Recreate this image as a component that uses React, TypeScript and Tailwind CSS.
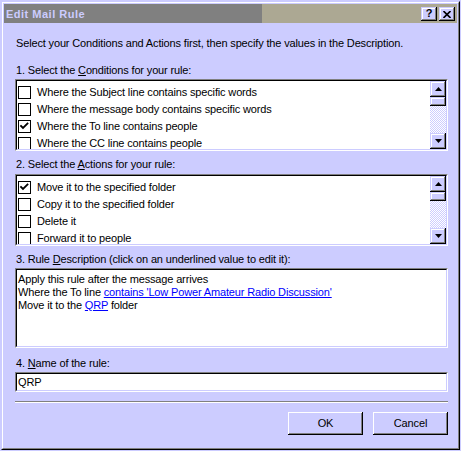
import React from 'react';

const conditions = [
  { label: 'Where the Subject line contains specific words', checked: false },
  { label: 'Where the message body contains specific words', checked: false },
  { label: 'Where the To line contains people', checked: true },
  { label: 'Where the CC line contains people', checked: false },
];

const actions = [
  { label: 'Move it to the specified folder', checked: true },
  { label: 'Copy it to the specified folder', checked: false },
  { label: 'Delete it', checked: false },
  { label: 'Forward it to people', checked: false },
];

function CheckBox({ checked }: { checked: boolean }) {
  return (
    <div className="w-[13px] h-[13px] border border-black bg-white flex-shrink-0">
      {checked && (
        <svg width="11" height="11" viewBox="0 0 11 11">
          <path d="M2 5 L4 7 L8.5 2.5" fill="none" stroke="#000" strokeWidth="1.8" strokeLinecap="square" />
        </svg>
      )}
    </div>
  );
}

function Arrow({ up }: { up: boolean }) {
  return (
    <svg width="7" height="4" viewBox="0 0 7 4">
      {up ? <polygon points="3.5,0 7,4 0,4" fill="#000" /> : <polygon points="0,0 7,0 3.5,4" fill="#000" />}
    </svg>
  );
}

const raised = 'shadow-[inset_-1px_-1px_#000000,inset_1px_1px_#ccccff,inset_-2px_-2px_#808080,inset_2px_2px_#ffffff]';

function ScrollBar() {
  return (
    <div className="w-[16px] flex flex-col flex-shrink-0">
      <div className={`h-[16px] bg-[#ccccff] flex items-center justify-center ${raised}`}>
        <Arrow up />
      </div>
      <div className={`h-[9px] bg-[#ccccff] ${raised}`} />
      <div className="flex-1 bg-[repeating-conic-gradient(#ffffff_0_25%,#ccccff_0_50%)] bg-[length:2px_2px]" />
      <div className={`h-[16px] bg-[#ccccff] flex items-center justify-center ${raised}`}>
        <Arrow up={false} />
      </div>
    </div>
  );
}

// sunken 2px field border
function Sunken({ className, children }: { className: string; children: React.ReactNode }) {
  return (
    <div className={`border border-t-[#808080] border-l-[#808080] border-b-white border-r-white ${className}`}>
      <div className="h-full border border-t-black border-l-black border-b-[#ccccff] border-r-[#ccccff] bg-white overflow-hidden">
        {children}
      </div>
    </div>
  );
}

function RuleList({ items }: { items: { label: string; checked: boolean }[] }) {
  return (
    <Sunken className="h-[72px]">
      <div className="flex h-full">
        <div className="flex-1 overflow-hidden pt-[3px]">
          {items.map((it) => (
            <div key={it.label} className="h-[17px] flex items-center pl-[1px] gap-[6px]">
              <CheckBox checked={it.checked} />
              <span className="whitespace-nowrap">{it.label}</span>
            </div>
          ))}
        </div>
        <ScrollBar />
      </div>
    </Sunken>
  );
}

const pushButton =
  'w-[75px] h-[23px] bg-[#ccccff] shadow-[inset_-1px_-1px_#000000,inset_1px_1px_#ffffff,inset_-2px_-2px_#808080,inset_2px_2px_#ccccff]';

export default function App() {
  return (
    <div className="w-[461px] h-[451px] bg-[#ccccff] pt-[1px] pl-[1px] overflow-hidden font-['Liberation_Sans',Arial,sans-serif] text-[11px] leading-[13px] tracking-[-0.15px] text-black">
      <div className="w-[459px] h-[449px] border border-t-[#ccccff] border-l-[#ccccff] border-r-black border-b-black">
        <div className="h-full border border-t-white border-l-white border-r-[#808080] border-b-[#808080] p-[1px] flex flex-col">
          {/* Title bar */}
          <div className="h-[19px] flex items-start bg-[linear-gradient(to_right,#808080_57%,#aca893_57%)] flex-shrink-0">
            <span className="pt-[4px] pl-[2px] font-bold text-[#ccccff] tracking-[0.5px]">Edit Mail Rule</span>
            <div className="ml-auto mt-[3px] mr-[2px] flex gap-[2px]">
              <div className={`w-[16px] h-[14px] bg-[#ccccff] flex items-center justify-center font-bold text-[11px] leading-[11px] ${raised}`}>
                <span className="pb-[1px]">?</span>
              </div>
              <div className={`w-[16px] h-[14px] bg-[#ccccff] flex items-center justify-center ${raised}`}>
                <svg width="8" height="7" viewBox="0 0 8 7">
                  <path d="M0.5 0 L7.5 7 M7.5 0 L0.5 7" stroke="#000" strokeWidth="1.6" />
                </svg>
              </div>
            </div>
          </div>

          {/* Body */}
          <div className="pl-[11px] pt-[14px] w-[444px] flex flex-col">
            <div className="h-[13px] pl-[1px] whitespace-nowrap">
              Select your Conditions and Actions first, then specify the values in the Description.
            </div>

            <div className="h-[13px] pl-[1px] mt-[14px]">
              1. Select the <span className="underline">C</span>onditions for your rule:
            </div>
            <div className="mt-[2px]">
              <RuleList items={conditions} />
            </div>

            <div className="h-[13px] pl-[1px] mt-[7px]">
              2. Select the <span className="underline">A</span>ctions for your rule:
            </div>
            <div className="mt-[3px]">
              <RuleList items={actions} />
            </div>

            <div className="h-[13px] pl-[1px] mt-[7px]">
              3. Rule <span className="underline">D</span>escription (click on an underlined value to edit it):
            </div>
            <div className="mt-[2px]">
              <Sunken className="h-[80px]">
                <div className="pt-[3px] pl-[1px] whitespace-nowrap">
                  <div>Apply this rule after the message arrives</div>
                  <div>
                    Where the To line{' '}
                    <span className="text-[#0000ff] underline">contains 'Low Power Amateur Radio Discussion'</span>
                  </div>
                  <div>
                    Move it to the <span className="text-[#0000ff] underline">QRP</span> folder
                  </div>
                </div>
              </Sunken>
            </div>

            <div className="h-[13px] pl-[1px] mt-[9px]">
              4. <span className="underline">N</span>ame of the rule:
            </div>
            <div className="mt-[2px]">
              <Sunken className="h-[20px]">
                <div className="h-full flex items-center pl-[1px]">QRP</div>
              </Sunken>
            </div>

            <div className="mt-[9px] h-[2px] border-t border-t-[#808080] border-b border-b-white" />

            <div className="mt-[9px] flex justify-end gap-[10px]">
              <button className={pushButton}>OK</button>
              <button className={pushButton}>Cancel</button>
            </div>
          </div>
        </div>
      </div>
    </div>
  );
}
